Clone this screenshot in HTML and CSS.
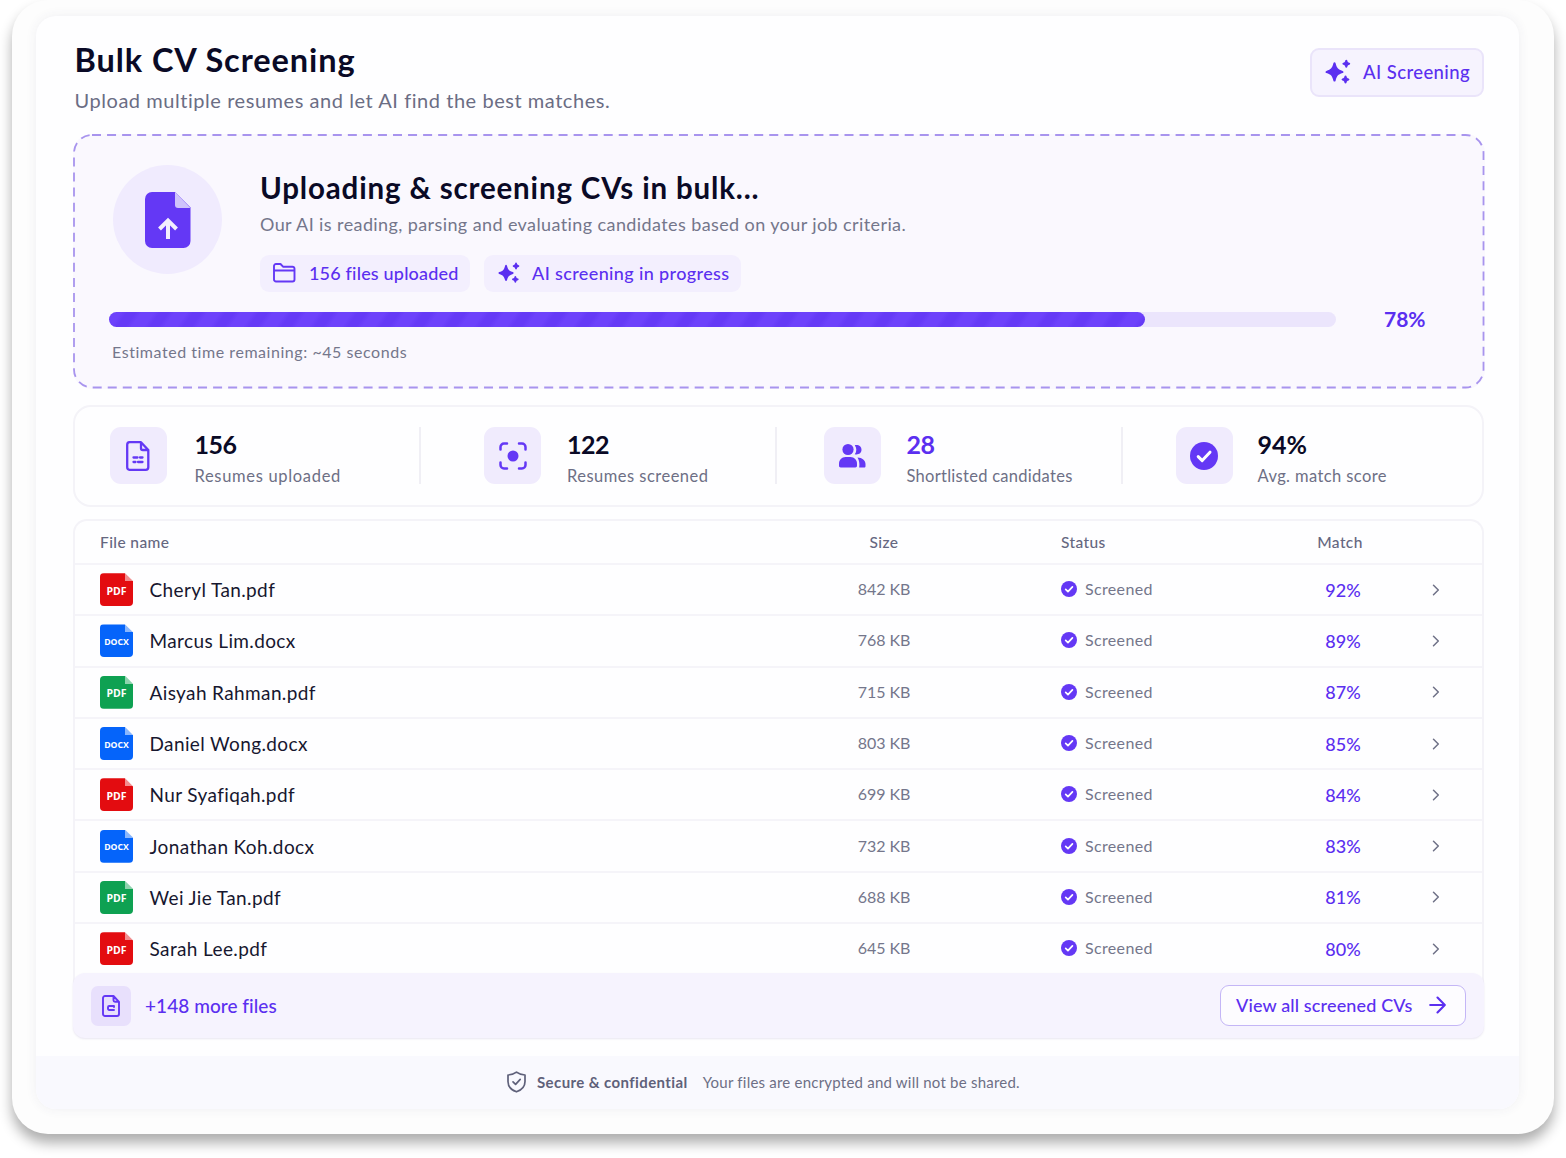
FILE: index.html
```html
<!DOCTYPE html>
<html lang="en">
<head>
    <meta charset="UTF-8">
    <meta name="viewport" content="width=device-width, initial-scale=1.0">
    <title>Bulk CV Screening</title>
    <link rel="stylesheet" href="styles.css">
</head>
<body>
    <!-- shared icons -->
    <svg class="sprite" aria-hidden="true">
        <symbol id="sparkles" viewBox="0 0 26 26">
            <path d="M9.500 3.300c.6 0 .9.4 1.100 1 1.200 4.700 2.300 6.100 7 7.600 1.200.4 1.200 1.800 0 2.200-4.700 1.500-5.800 2.900-7 7.600-.3 1.200-1.900 1.200-2.200 0-1.200-4.700-2.300-6.100-7-7.600-1.200-.4-1.200-1.800 0-2.200 4.700-1.500 5.800-2.900 7-7.600.2-.6.500-1 1.100-1z"/>
            <path d="M21.300.7c.6 0 .9.4 1 .9.300 1.400.7 1.800 2.100 2.200 1.100.300 1.100 1.700 0 2-1.400.4-1.800.8-2.100 2.200-.2 1.100-1.800 1.100-2 0-.3-1.400-.7-1.800-2.100-2.200-1.100-.3-1.100-1.700 0-2 1.400-.4 1.800-.8 2.100-2.200.1-.5.400-.9 1-.9z"/>
            <path d="M20.500 16.400c.6 0 .9.400 1 .9.300 1.400.7 1.800 2.100 2.200 1.100.300 1.100 1.700 0 2-1.400.4-1.800.8-2.100 2.200-.2 1.100-1.800 1.100-2 0-.3-1.400-.7-1.800-2.100-2.200-1.100-.3-1.100-1.700 0-2 1.400-.4 1.800-.8 2.100-2.200.1-.5.400-.9 1-.9z"/>
        </symbol>
        <symbol id="check" viewBox="0 0 28 28">
            <circle cx="14" cy="14" r="14" fill="#6438f5"/>
            <path d="M8.200 14.600l4 4 7.800-8.400" fill="none" stroke="#fff" stroke-width="3" stroke-linecap="round" stroke-linejoin="round"/>
        </symbol>
        <symbol id="chevron" viewBox="0 0 8 12">
            <path d="M1.500 1.200L6.300 6l-4.800 4.800" fill="none" stroke="#6f7187" stroke-width="1.500" stroke-linecap="round" stroke-linejoin="round"/>
        </symbol>
    </svg>

    <div class="frame">
        <main class="card">
            <header class="header">
                <div>
                    <h1>Bulk CV Screening</h1>
                    <p class="subtitle">Upload multiple resumes and let AI find the best matches.</p>
                </div>
                <button class="ai-button">
                    <svg width="26" height="26"><use href="#sparkles"/></svg>
                    AI Screening
                </button>
            </header>

            <section class="upload">
                <svg class="upload-border"><rect x="1" y="1" width="1409.500" height="252.500" rx="18"/></svg>
                <div class="upload-top">
                    <div class="upload-icon">
                        <svg width="46" height="56" viewBox="0 0 46 56">
                            <path d="M7 0h23l15.500 15.500V49a7 7 0 0 1-7 7H7a7 7 0 0 1-7-7V7a7 7 0 0 1 7-7z" fill="#6438f5"/>
                            <path d="M30 0l15.500 16H33a3 3 0 0 1-3-3z" fill="#cfc3fb"/>
                            <path d="M23 47V29M14.500 37l8.500-8.500 8.500 8.500" fill="none" stroke="#f3eefe" stroke-width="4"/>
                        </svg>
                    </div>
                    <div>
                        <h2>Uploading &amp; screening CVs in bulk...</h2>
                        <p class="upload-text">Our AI is reading, parsing and evaluating candidates based on your job criteria.</p>
                        <div class="chips">
                            <span class="chip files">
                                <svg width="23" height="20" viewBox="0 0 23 20" fill="none" stroke="#6438f5" stroke-width="1.900" stroke-linejoin="round">
                                    <path d="M1 16.500V3a2 2 0 0 1 2-2h4.500l2.500 2.700h9.500a2 2 0 0 1 2 2v10.800a2 2 0 0 1-2 2H3a2 2 0 0 1-2-2zM1 7.500h20.500"/>
                                </svg>
                                156 files uploaded
                            </span>
                            <span class="chip progress-chip">
                                <svg width="22" height="22"><use href="#sparkles"/></svg>
                                AI screening in progress
                            </span>
                        </div>
                    </div>
                </div>
                <div class="progress">
                    <div class="track"><div class="fill"></div></div>
                    <span class="percent">78%</span>
                </div>
                <p class="estimate">Estimated time remaining: ~45 seconds</p>
            </section>

            <section class="stats">
                <div class="stat uploaded">
                    <div class="tile">
                        <svg width="24" height="30" viewBox="0 0 24 30" fill="none" stroke="#6438f5" stroke-width="2.300" stroke-linejoin="round" stroke-linecap="round">
                            <path d="M3.500 1.200H15l7.300 7.800v17.300a2.500 2.500 0 0 1-2.500 2.500H3.500A2.500 2.500 0 0 1 1.200 26.300V3.700a2.500 2.500 0 0 1 2.300-2.500zM15 1.500v5.700A1.800 1.800 0 0 0 16.800 9h5"/>
                            <path d="M7.500 16.500h4M14 16.500h2.500M7.500 21h2M12 21h4.500"/>
                        </svg>
                    </div>
                    <div>
                        <div class="value">156</div>
                        <div class="label">Resumes uploaded</div>
                    </div>
                </div>
                <div class="stat screened">
                    <div class="tile">
                        <svg width="28" height="28" viewBox="0 0 28 28" fill="none" stroke="#6438f5" stroke-width="2.500" stroke-linecap="round">
                            <path d="M1.500 7.500v-2.500a3.500 3.500 0 0 1 3.500-3.500H8M20 1.500h3A3.500 3.500 0 0 1 26.500 5v2.500M26.500 20.500V23a3.500 3.500 0 0 1-3.500 3.500h-3M8 26.500H5A3.500 3.500 0 0 1 1.500 23v-2.500"/>
                            <circle cx="14" cy="14" r="5.500" fill="#6438f5" stroke="none"/>
                        </svg>
                    </div>
                    <div>
                        <div class="value">122</div>
                        <div class="label">Resumes screened</div>
                    </div>
                </div>
                <div class="stat shortlisted">
                    <div class="tile">
                        <svg width="28" height="26" viewBox="0 0 28 26" fill="#6438f5">
                            <circle cx="10" cy="6.500" r="5.600"/>
                            <path d="M7.500 14h5c3.800 0 6.500 3 6.500 6.500v2.300c0 1-.7 1.700-1.700 1.700H2.700c-1 0-1.700-.7-1.700-1.700v-2.300C1 17 3.700 14 7.500 14z"/>
                            <path d="M16.800 2.200c4-.7 6.700 1.400 6.700 4.600 0 3.400-3 5.300-6.700 4.500 2-2.600 2-6.500 0-9.100zM19.500 14.500c4.700.3 8 2.800 8 6.500v2c0 1-.5 1.500-1.500 1.500h-4.800c.7-4-.2-7.500-1.700-10z"/>
                        </svg>
                    </div>
                    <div>
                        <div class="value accent">28</div>
                        <div class="label">Shortlisted candidates</div>
                    </div>
                </div>
                <div class="stat score">
                    <div class="tile">
                        <svg width="28" height="28"><use href="#check"/></svg>
                    </div>
                    <div>
                        <div class="value">94%</div>
                        <div class="label">Avg. match score</div>
                    </div>
                </div>
            </section>

            <section class="table">
                <div class="row head">
                    <span>File name</span>
                    <span class="size">Size</span>
                    <span class="status">Status</span>
                    <span class="match">Match</span>
                </div>
                <div class="row">
                    <span class="name"><i class="file pdf">PDF</i>Cheryl Tan.pdf</span>
                    <span class="size">842 KB</span>
                    <span class="status"><svg width="16" height="16"><use href="#check"/></svg>Screened</span>
                    <span class="match">92%</span>
                    <svg class="chevron" width="8" height="12"><use href="#chevron"/></svg>
                </div>
                <div class="row">
                    <span class="name"><i class="file docx">DOCX</i>Marcus Lim.docx</span>
                    <span class="size">768 KB</span>
                    <span class="status"><svg width="16" height="16"><use href="#check"/></svg>Screened</span>
                    <span class="match">89%</span>
                    <svg class="chevron" width="8" height="12"><use href="#chevron"/></svg>
                </div>
                <div class="row">
                    <span class="name"><i class="file pdf green">PDF</i>Aisyah Rahman.pdf</span>
                    <span class="size">715 KB</span>
                    <span class="status"><svg width="16" height="16"><use href="#check"/></svg>Screened</span>
                    <span class="match">87%</span>
                    <svg class="chevron" width="8" height="12"><use href="#chevron"/></svg>
                </div>
                <div class="row">
                    <span class="name"><i class="file docx">DOCX</i>Daniel Wong.docx</span>
                    <span class="size">803 KB</span>
                    <span class="status"><svg width="16" height="16"><use href="#check"/></svg>Screened</span>
                    <span class="match">85%</span>
                    <svg class="chevron" width="8" height="12"><use href="#chevron"/></svg>
                </div>
                <div class="row">
                    <span class="name"><i class="file pdf">PDF</i>Nur Syafiqah.pdf</span>
                    <span class="size">699 KB</span>
                    <span class="status"><svg width="16" height="16"><use href="#check"/></svg>Screened</span>
                    <span class="match">84%</span>
                    <svg class="chevron" width="8" height="12"><use href="#chevron"/></svg>
                </div>
                <div class="row">
                    <span class="name"><i class="file docx">DOCX</i>Jonathan Koh.docx</span>
                    <span class="size">732 KB</span>
                    <span class="status"><svg width="16" height="16"><use href="#check"/></svg>Screened</span>
                    <span class="match">83%</span>
                    <svg class="chevron" width="8" height="12"><use href="#chevron"/></svg>
                </div>
                <div class="row">
                    <span class="name"><i class="file pdf green">PDF</i>Wei Jie Tan.pdf</span>
                    <span class="size">688 KB</span>
                    <span class="status"><svg width="16" height="16"><use href="#check"/></svg>Screened</span>
                    <span class="match">81%</span>
                    <svg class="chevron" width="8" height="12"><use href="#chevron"/></svg>
                </div>
                <div class="row">
                    <span class="name"><i class="file pdf">PDF</i>Sarah Lee.pdf</span>
                    <span class="size">645 KB</span>
                    <span class="status"><svg width="16" height="16"><use href="#check"/></svg>Screened</span>
                    <span class="match">80%</span>
                    <svg class="chevron" width="8" height="12"><use href="#chevron"/></svg>
                </div>
                <div class="more">
                    <div class="more-icon">
                        <svg width="18" height="22" viewBox="0 0 18 22" fill="none" stroke="#6438f5" stroke-width="1.900" stroke-linejoin="round" stroke-linecap="round">
                            <path d="M3 1h8.500L17 6.800V19a2 2 0 0 1-2 2H3a2 2 0 0 1-2-2V3a2 2 0 0 1 2-2zM11.500 1.200v4a1.500 1.500 0 0 0 1.500 1.500h3.800"/>
                            <path d="M12 11H7.200A1.200 1.200 0 0 0 6 12.200v1.600A1.200 1.200 0 0 0 7.200 15H12M12 11v1"/>
                        </svg>
                    </div>
                    <span class="more-text">+148 more files</span>
                    <button class="view-all">
                        View all screened CVs
                        <svg width="17" height="18" viewBox="0 0 17 18" fill="none" stroke="#5b2ff0" stroke-width="2.100" stroke-linecap="round" stroke-linejoin="round">
                            <path d="M1.200 9h14.300M8.500 1.500L15.800 9l-7.300 7.500"/>
                        </svg>
                    </button>
                </div>
            </section>

            <footer class="footer">
                <svg width="19" height="22" viewBox="0 0 19 22" fill="none" stroke="#5f617a" stroke-width="1.700" stroke-linecap="round" stroke-linejoin="round">
                    <path d="M9.500 1.200C11.500 2.800 14.500 3.800 18 4v6.500c0 5-3.300 8.500-8.500 10.300C4.300 19 1 15.500 1 10.500V4c3.500-.2 6.500-1.200 8.500-2.800z"/>
                    <path d="M6 10.800l2.600 2.600 4.600-5"/>
                </svg>
                <strong>Secure &amp; confidential</strong>
                <span>Your files are encrypted and will not be shared.</span>
            </footer>
        </main>
    </div>
</body>
</html>
```
FILE: styles.css
```css
* {
    box-sizing: border-box;
}

body {
    margin: 0;
    height: 1158px;
    overflow: hidden;
    background-color: #fff;
    font-family: Lato, sans-serif;
    color: #0a0a26;
}

h1, h2, p {
    margin: 0;
}

svg {
    flex: none;
    display: block;
}

button {
    font-family: inherit;
    cursor: pointer;
}

.sprite {
    display: none;
}

.frame {
    width: 1542px;
    height: 1134px;
    margin: 0 12px;
    padding: 16px 35px 25px 24px;
    background-color: #fdfdfd;
    border-radius: 36px;
    box-shadow: 0 9px 13px rgba(0, 0, 0, 0.32);
}

.card {
    height: 1093px;
    padding-top: 24px;
    display: flex;
    flex-direction: column;
    background-color: #fefeff;
    border-radius: 20px;
    box-shadow: 0 0 12px rgba(60, 60, 100, 0.07);
    overflow: hidden;
}

.header {
    height: 94px;
    padding: 0 35px 0 38.5px;
    display: flex;
    justify-content: space-between;
}

h1 {
    font-size: 32.5px;
    line-height: 40px;
    font-weight: 700;
    letter-spacing: 0.92px;
}

.subtitle {
    margin-top: 6px;
    font-size: 20px;
    line-height: 28px;
    letter-spacing: 0.55px;
    color: #6b6d84;
}

.ai-button {
    width: 174px;
    height: 49px;
    margin-top: 8px;
    padding: 0 0 2px 13px;
    display: flex;
    align-items: center;
    gap: 12px;
    background-color: #f6f3fe;
    border: 2px solid #eae4fa;
    border-radius: 9px;
    font-size: 18.5px;
    font-weight: 500;
    letter-spacing: 0.4px;
    white-space: nowrap;
    color: #5b2ff0;
    fill: #5b2ff0;
}

.upload {
    position: relative;
    width: 1412px;
    height: 254.5px;
    margin-left: 36.5px;
    padding: 31px 0 0 40.5px;
    background-color: #faf8fe;
    border-radius: 19px;
}

.upload-border {
    position: absolute;
    inset: 0;
    width: 100%;
    height: 100%;
    fill: none;
    stroke: #a894ee;
    stroke-width: 1.8;
    stroke-dasharray: 9 6.05;
}

.upload-top {
    display: flex;
    gap: 38px;
}

.upload-icon {
    width: 109px;
    height: 109px;
    display: flex;
    align-items: center;
    justify-content: center;
    background-color: #f0ebfe;
    border-radius: 50%;
}

h2 {
    margin-top: 5px;
    font-size: 29.5px;
    line-height: 36px;
    font-weight: 700;
    letter-spacing: 0.84px;
}

.upload-text {
    margin-top: 5px;
    font-size: 18px;
    line-height: 26px;
    letter-spacing: 0.4px;
    color: #74768b;
}

.chips {
    margin-top: 18px;
    display: flex;
    gap: 14px;
}

.chip {
    height: 37px;
    padding-bottom: 1px;
    display: flex;
    align-items: center;
    background-color: #f3effe;
    border-radius: 9px;
    font-size: 18px;
    font-weight: 500;
    white-space: nowrap;
    color: #5b2ff0;
    fill: #5b2ff0;
}

.files {
    width: 210px;
    padding-left: 13px;
    gap: 13px;
    letter-spacing: 0.18px;
}

.progress-chip {
    width: 257px;
    padding-left: 14px;
    gap: 12px;
    letter-spacing: 0.37px;
}

.progress {
    height: 15px;
    margin: 20px 0 0 -4px;
    display: flex;
    align-items: center;
    gap: 48px;
}

.track {
    width: 1227px;
    height: 15px;
    background-color: #ebe5fc;
    border-radius: 8px;
}

.fill {
    width: 1036px;
    height: 15px;
    border-radius: 8px;
    background: repeating-linear-gradient(125deg, #6d42fb 0 10px, #653af6 15px 22px, #6d42fb 27px);
}

.percent {
    padding-bottom: 2px;
    font-size: 21px;
    font-weight: 700;
    color: #5b2ff0;
}

.estimate {
    margin: 14px 0 0 -1px;
    font-size: 16px;
    line-height: 22px;
    letter-spacing: 0.55px;
    color: #74768b;
}

.stats {
    width: 1411px;
    height: 102px;
    margin: 16px 0 0 37px;
    display: grid;
    grid-template-columns: 346px 356px 346px 1fr;
    align-items: center;
    border: 2px solid #f4f3f8;
    border-radius: 18px;
}

.stat {
    height: 57px;
    display: flex;
    align-items: center;
    border-right: 2px solid #f0eff5;
}

.uploaded {
    padding-left: 34.5px;
    gap: 28px;
}

.screened {
    padding-left: 63px;
    gap: 26px;
}

.shortlisted {
    padding-left: 46.5px;
    gap: 26px;
}

.score {
    padding-left: 52.5px;
    gap: 25px;
    border-right: none;
}

.tile {
    width: 57px;
    height: 57px;
    display: flex;
    align-items: center;
    justify-content: center;
    background-color: #f0ebfd;
    border-radius: 11px;
}

.value {
    margin-top: 5px;
    font-size: 25px;
    line-height: 30px;
    font-weight: 700;
    letter-spacing: -0.5px;
}

.score .value {
    letter-spacing: 0;
}

.accent {
    color: #5b2ff0;
}

.label {
    margin-top: 5px;
    font-size: 16.5px;
    line-height: 24px;
    white-space: nowrap;
    color: #6d6f85;
}

.uploaded .label {
    letter-spacing: 0.68px;
}

.screened .label {
    letter-spacing: 0.48px;
}

.shortlisted .label {
    letter-spacing: 0.28px;
}

.score .label {
    letter-spacing: 0.4px;
}

.table {
    width: 1411px;
    margin: 12px 0 0 37px;
    border: 2px solid #f4f3f8;
    border-bottom: none;
    border-radius: 14px;
}

.row {
    height: 51.3px;
    padding-left: 25px;
    display: grid;
    grid-template-columns: 684px 200px 310px 98px 88px;
    align-items: center;
    border-top: 2px solid #f5f4f9;
}

.head {
    height: 42.5px;
    border-top: none;
    font-size: 15.5px;
    font-weight: 500;
    letter-spacing: 0.4px;
    color: #65677f;
}

.name {
    display: flex;
    align-items: center;
    gap: 16.5px;
    font-size: 19px;
    letter-spacing: 0.38px;
    color: #17172f;
}

/* file type badge with a folded corner */
.file {
    width: 33px;
    height: 33px;
    padding-top: 2px;
    display: flex;
    align-items: center;
    justify-content: center;
    border-radius: 4px;
    font: 700 10.5px "Open Sans", sans-serif;
    letter-spacing: 0;
    color: #fff;
    background: linear-gradient(#fff8, #fff8) top right / 8px 8px no-repeat;
    clip-path: polygon(0 0, 76% 0, 100% 24%, 100% 100%, 0 100%);
}

.pdf {
    background-color: #e30c10;
}

.docx {
    background-color: #0564fa;
    font-size: 8.7px;
}

.green {
    background-color: #0ea152;
}

.size {
    text-align: center;
}

.row .size {
    padding-bottom: 2px;
    font-size: 16px;
    letter-spacing: -0.1px;
    color: #74768b;
}

.status {
    padding: 0 0 1px 77px;
    display: flex;
    align-items: center;
    gap: 8px;
    font-size: 16px;
    line-height: 18px;
    letter-spacing: 0.35px;
    color: #74768b;
}

.match {
    text-align: center;
    font-size: 18px;
    font-weight: 500;
    color: #5b2ff0;
}

.head .size, .head .status, .head .match {
    padding-bottom: 0;
    font-size: 15.5px;
    letter-spacing: 0.4px;
    color: #65677f;
}

.head .match {
    padding-right: 6px;
}

.chevron {
    justify-self: center;
}

.more {
    height: 65px;
    margin: 0 -2px;
    padding: 0 18px;
    display: flex;
    align-items: center;
    background-color: #f6f3fe;
    border-radius: 12px;
    box-shadow: 0 1px 2px rgba(80, 60, 140, 0.12);
}

.more-icon {
    width: 40px;
    height: 40px;
    display: flex;
    align-items: center;
    justify-content: center;
    background-color: #e8e0fc;
    border-radius: 7px;
}

.more-text {
    margin-left: 14px;
    padding-bottom: 1px;
    font-size: 19px;
    font-weight: 500;
    letter-spacing: 0.05px;
    color: #5b2ff0;
}

.view-all {
    width: 246px;
    height: 41px;
    margin-left: auto;
    padding: 0 0 1px 15px;
    display: flex;
    align-items: center;
    gap: 17px;
    background-color: #fdfcff;
    border: 1.5px solid #c4b6f6;
    border-radius: 9px;
    font-size: 18px;
    font-weight: 500;
    letter-spacing: 0.14px;
    white-space: nowrap;
    color: #5b2ff0;
}

.footer {
    height: 53px;
    margin-top: auto;
    padding: 0 0 1px 471px;
    display: flex;
    align-items: center;
    background-color: #f9f9fe;
    font-size: 15px;
    letter-spacing: 0.22px;
    color: #6d6f85;
}

.footer strong {
    margin: 0 15px 0 11px;
    letter-spacing: 0.4px;
    color: #5f617a;
}
```
